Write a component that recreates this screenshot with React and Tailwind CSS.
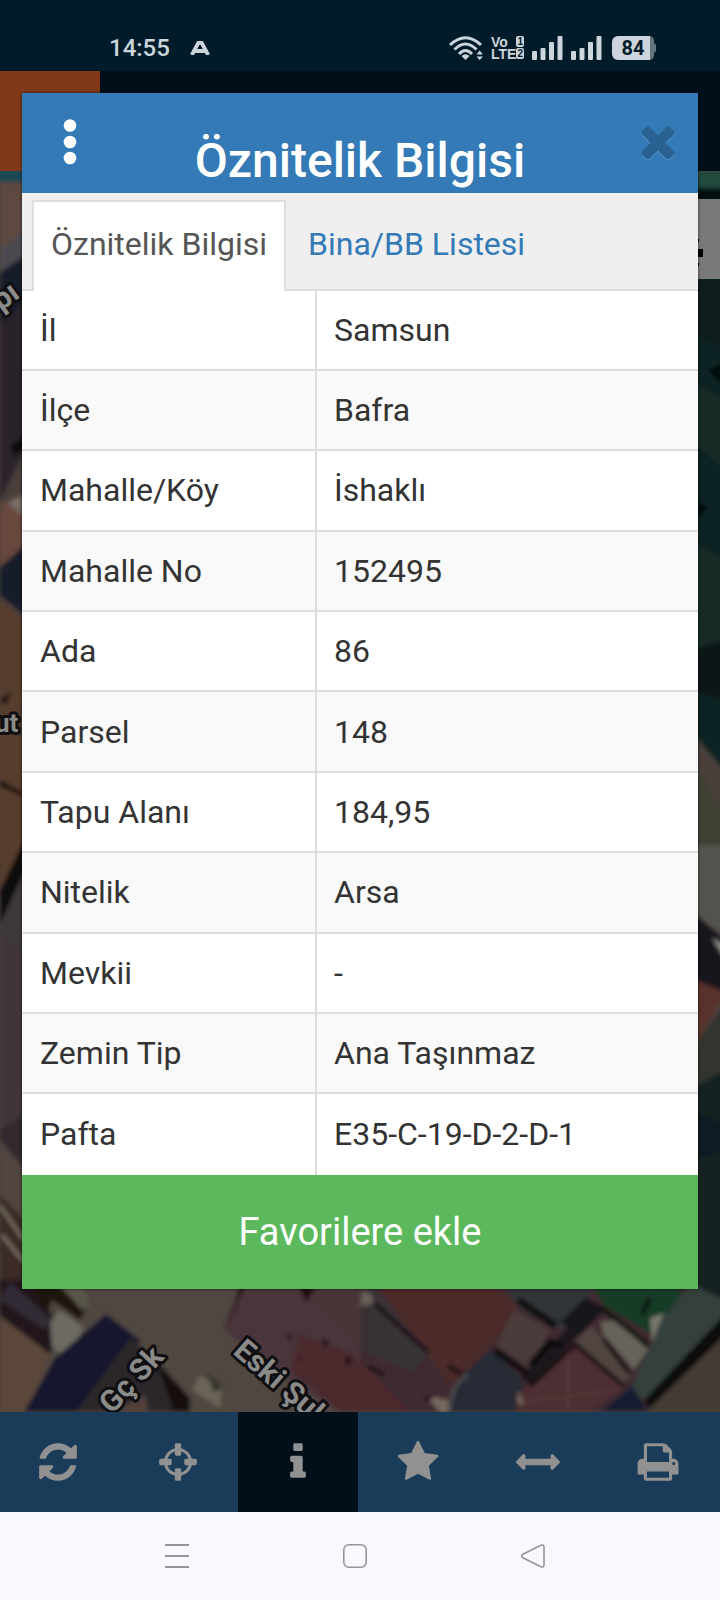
import { useState } from 'react'

const rows = [
  ['İl', 'Samsun'],
  ['İlçe', 'Bafra'],
  ['Mahalle/Köy', 'İshaklı'],
  ['Mahalle No', '152495'],
  ['Ada', '86'],
  ['Parsel', '148'],
  ['Tapu Alanı', '184,95'],
  ['Nitelik', 'Arsa'],
  ['Mevkii', '-'],
  ['Zemin Tip', 'Ana Taşınmaz'],
  ['Pafta', 'E35-C-19-D-2-D-1'],
]

const tools = [
  {
    id: 'refresh',
    label: 'Yenile',
    viewBox: '-128 0 1792 1792',
    d: 'M1511 1056q0 5-1 7-64 268-268 434.5t-478 166.5q-146 0-282.5-55t-243.5-157l-129 129q-19 19-45 19t-45-19-19-45v-448q0-26 19-45t45-19h448q26 0 45 19t19 45-19 45l-137 137q71 66 161 102t187 36q134 0 250-65t186-179q11-17 53-117 8-23 30-23h192q13 0 22.5 9.5t9.5 22.5zM1536 256v448q0 26-19 45t-45 19h-448q-26 0-45-19t-19-45 19-45l138-138q-148-137-349-137-134 0-250 65t-186 179q-11 17-53 117-8 23-30 23h-199q-13 0-22.5-9.5t-9.5-22.5v-7q65-268 270-434.5t480-166.5q146 0 284 55.5t245 156.5l130-129q19-19 45-19t45 19 19 45z',
  },
  {
    id: 'locate',
    label: 'Konum',
    viewBox: '-128 0 1792 1792',
    d: 'M1197 1024h-109q-26 0-45-19t-19-45v-128q0-26 19-45t45-19h109q-32-108-112.5-188.5t-188.5-112.5v109q0 26-19 45t-45 19h-128q-26 0-45-19t-19-45v-109q-108 32-188.5 112.5t-112.5 188.5h109q26 0 45 19t19 45v128q0 26-19 45t-45 19h-109q32 108 112.5 188.5t188.5 112.5v-109q0-26 19-45t45-19h128q26 0 45 19t19 45v109q108-32 188.5-112.5t112.5-188.5zM1536 832v128q0 26-19 45t-45 19h-143q-37 161-154.5 278.5t-278.5 154.5v143q0 26-19 45t-45 19h-128q-26 0-45-19t-19-45v-143q-161-37-278.5-154.5t-154.5-278.5h-143q-26 0-45-19t-19-45v-128q0-26 19-45t45-19h143q37-161 154.5-278.5t278.5-154.5v-143q0-26 19-45t45-19h128q26 0 45 19t19 45v143q161 37 278.5 154.5t154.5 278.5h143q26 0 45 19t19 45z',
  },
  {
    id: 'info',
    label: 'Bilgi',
    viewBox: '-576 0 1792 1792',
    d: 'M640 1344v128q0 26-19 45t-45 19h-512q-26 0-45-19t-19-45v-128q0-26 19-45t45-19h64v-384h-64q-26 0-45-19t-19-45v-128q0-26 19-45t45-19h384q26 0 45 19t19 45v576h64q26 0 45 19t19 45zM512 192v192q0 26-19 45t-45 19h-256q-26 0-45-19t-19-45v-192q0-26 19-45t45-19h256q26 0 45 19t19 45z',
  },
  {
    id: 'favorites',
    label: 'Favoriler',
    viewBox: '-64 0 1792 1792',
    d: 'M1664 647q0 22-26 48l-363 354 86 500q1 7 1 20 0 21-10.5 35.5t-30.5 14.5q-19 0-40-12l-449-236-449 236q-22 12-40 12-21 0-31.5-14.5t-10.5-35.5q0-6 2-20l86-500-364-354q-25-27-25-48 0-37 56-46l502-73 225-455q19-41 49-41t49 41l225 455 502 73q56 9 56 46z',
  },
  {
    id: 'measure',
    label: 'Ölçüm',
    viewBox: '0 0 1792 1792',
    d: 'M1792 896q0 26-19 45l-256 256q-19 19-45 19t-45-19-19-45v-128h-1024v128q0 26-19 45t-45 19-45-19l-256-256q-19-19-19-45t19-45l256-256q19-19 45-19t45 19 19 45v128h1024v-128q0-26 19-45t45-19 45 19l256 256q19 19 19 45z',
  },
  {
    id: 'print',
    label: 'Yazdır',
    viewBox: '-64 0 1792 1792',
    d: 'M384 1536h896v-256h-896v256zM384 896h896v-384h-160q-40 0-68-28t-28-68v-160h-640v640zM1536 960q0-26-19-45t-45-19-45 19-19 45 19 45 45 19 45-19 19-45zM1664 960v416q0 13-9.5 22.5t-22.5 9.5h-224v160q0 40-28 68t-68 28h-960q-40 0-68-28t-28-68v-160h-224q-13 0-22.5-9.5t-9.5-22.5v-416q0-79 56.5-135.5t135.5-56.5h64v-544q0-40 28-68t68-28h672q40 0 88 20t76 48l152 152q28 28 48 76t20 88v256h64q79 0 135.5 56.5t56.5 135.5z',
  },
]

function WifiIcon() {
  return (
    <svg viewBox="0 0 34 24" className="h-6 w-[34px]" fill="none" stroke="#cbd5db" strokeWidth="3">
      <path d="M1 9Q16.500-5.500 32 9" />
      <path d="M5.500 13.500Q16.500 2.500 27.500 13.500" />
      <path d="M10 18Q16.500 11 23 18" />
      <path d="M12.500 20Q16.500 16.500 20.500 20L16.500 24Z" fill="#cbd5db" stroke="none" />
      <path d="M27.500 18.500L30.700 14.500L34 18.500ZM27.500 20.500L30.700 24L34 20.500Z" fill="#cbd5db" stroke="none" />
    </svg>
  )
}

function SignalIcon() {
  return (
    <svg viewBox="0 0 31 24" className="h-6 w-[31px]" fill="#cbd5db">
      <rect x="0" y="15" width="5" height="9" rx="1" />
      <rect x="8.500" y="12" width="5" height="12" rx="1" />
      <rect x="17" y="6" width="5" height="18" rx="1" />
      <rect x="25.500" y="0" width="5" height="24" rx="1" />
    </svg>
  )
}

function StatusBar() {
  return (
    <header className="flex h-[71px] items-center justify-between bg-[#001b29] pt-6 pr-16 pl-[109px] text-[#cbd5db]">
      <div className="flex items-center gap-5">
        <span className="text-2xl font-medium">14:55</span>
        <svg viewBox="0 0 20 14" className="h-3.5 w-5" fill="none" stroke="#cbd5db" strokeWidth="3.800">
          <path d="M1.800 14L8.400 1.800H11.600L18.200 14M5 10H15" />
        </svg>
      </div>
      <div className="flex items-center gap-2">
        <WifiIcon />
        <div className="flex flex-col font-['Liberation_Sans',sans-serif] text-sm leading-3 font-bold">
          <span className="flex items-center justify-between">
            Vo
            <span className="rounded-xs bg-[#cbd5db] px-px text-[10px] leading-[11px] text-[#001b29]">1</span>
          </span>
          <span className="flex items-center">
            LTE
            <span className="rounded-xs bg-[#cbd5db] px-px text-[10px] leading-[11px] text-[#001b29]">2</span>
          </span>
        </div>
        <SignalIcon />
        <SignalIcon />
        <div className="ml-0.5 flex items-center">
          <span className="flex h-6 w-[38px] items-center justify-center rounded-l-md bg-[#cbd5db] pl-1 text-xl leading-6 font-bold text-[#001b29]">
            84
          </span>
          <svg viewBox="0 0 6 24" className="h-6 w-1.5" fill="#64747d">
            <path d="M0 0Q4 1 4 5V7L6 9V15L4 17V19Q4 23 0 24Z" />
          </svg>
        </div>
      </div>
    </header>
  )
}

function MapView() {
  return (
    <svg
      viewBox="0 171 720 1241"
      preserveAspectRatio="xMidYMid slice"
      className="absolute inset-0 h-full w-full"
    >
      <defs>
        <filter id="soft" x="-5%" y="-5%" width="110%" height="110%">
          <feGaussianBlur stdDeviation="2" />
        </filter>
      </defs>
      <rect y="171" width="720" height="1241" fill="#4a403b" />
      <g filter="url(#soft)">
        {/* left edge */}
        <rect x="-5" y="160" width="60" height="22" fill="#1d4856" />
        <path d="M0 183H30V230L0 252Z" fill="#5d483f" />
        <path d="M0 250L30 226V255L0 275Z" fill="#4c4a50" />
        <path d="M0 272L30 252V300L0 330Z" fill="#191a2b" />
        <path d="M0 325L30 296V440L0 500Z" fill="#2a232b" />
        <path d="M10 446L30 432V445L14 456Z" fill="#07070b" />
        <path d="M0 505L30 490V540L0 566Z" fill="#68473c" />
        <path d="M8 503L22 496V515Z" fill="#777069" />
        <path d="M0 568L30 540V620L0 595Z" fill="#191d2a" />
        <path d="M0 600L30 625V840L0 900Z" fill="#573e2d" />
        <path d="M0 700L12 690L6 705Z" fill="#180d0b" />
        <path d="M0 780L30 796V800L0 786Z" fill="#180d0b" />
        <path d="M0 890L30 828V860L0 925Z" fill="#100b0d" />
        <path d="M0 925L30 860V965L0 940Z" fill="#3d373b" />
        <path d="M0 930L30 960V1120L0 1200Z" fill="#40343a" />
        <path d="M0 1130L30 1110V1180L0 1150Z" fill="#33292d" />
        <path d="M0 1140L30 1175V1230L0 1200Z" fill="#51453f" />
        <path d="M0 1195L30 1225V1290H0Z" fill="#3b2b25" />
        <path d="M0 1206L24 1240M2 1235L24 1262" stroke="#7b7567" strokeWidth="3" />

        {/* right edge */}
        <path d="M690 171H725V770L690 730Z" fill="#102320" />
        <path d="M690 171H725V188H690Z" fill="#244a3e" />
        <path d="M690 188H725V200H690Z" fill="#050d0e" />
        <path d="M690 280H725V350L690 330Z" fill="#0d1b1c" />
        <path d="M708 370L725 362V388Z" fill="#030b0b" />
        <path d="M690 380L725 400V470L690 440Z" fill="#182b25" />
        <path d="M690 500L708 506L698 520Z" fill="#040b0c" />
        <path d="M690 540L725 560V640L690 660Z" fill="#182b25" />
        <path d="M690 650L725 640V700L690 690Z" fill="#0a1818" />
        <path d="M690 770L704 775L725 815V850H690Z" fill="#3f4035" />
        <path d="M690 845H725V935L690 910Z" fill="#53534d" />
        <path d="M690 910L725 940V1000H690Z" fill="#19141d" />
        <path d="M712 938L725 945V958Z" fill="#8c8c88" />
        <path d="M690 978L725 992L698 1040H690Z" fill="#59302b" />
        <path d="M690 1050L725 1005V1090L690 1110Z" fill="#33362d" />
        <path d="M690 1090L725 1070V1310H690Z" fill="#122320" />
        <path d="M690 1110L725 1125V1150L690 1160Z" fill="#0b1a20" />

        {/* strip under the dialog */}
        <path d="M0 1280H690L725 1310V1420H0Z" fill="#50463f" />
        <path d="M0 1318L50 1352L28 1412H0Z" fill="#5b473b" />
        <path d="M0 1280H30L62 1330L50 1354L0 1316Z" fill="#21181b" />
        <path d="M10 1282L50 1318L45 1330L0 1300Z" fill="#302c35" />
        <path d="M30 1284H66L86 1308L80 1320L52 1300L48 1312Z" fill="#1d130c" />
        <path d="M60 1286H82L90 1305L82 1310Z" fill="#5a564b" />
        <path d="M50 1322L60 1310L84 1328L66 1358L52 1347Z" fill="#6c6b62" />
        <path d="M55 1358L106 1314L140 1340L108 1412H24Z" fill="#14172e" />
        <path d="M130 1338L158 1362L190 1405L188 1412H76Z" fill="#2b282c" />
        <path d="M156 1360L190 1398V1412H174Z" fill="#190f11" />
        <path d="M145 1395L110 1412H148Z" fill="#533f3b" />
        <path d="M200 1375L230 1395L220 1408L192 1390Z" fill="#6b6559" />
        <path d="M206 1372L224 1386L214 1393Z" fill="#37362f" />
        <path d="M240 1284H690L725 1310V1412H360L224 1328Z" fill="#402a30" />
        <path d="M224 1328L340 1414H220Z" fill="#50463f" />
        <path d="M242 1284L238 1310L224 1330L300 1390L340 1412L360 1380V1284Z" fill="#49363a" />
        <path d="M300 1284H360V1345L322 1312Z" fill="#493438" />
        <path d="M298 1284H318L306 1302Z" fill="#1b0c11" />
        <path d="M240 1284H248L235 1304Z" fill="#211317" />
        <path d="M300 1334L350 1352L410 1412H340L290 1370Z" fill="#4b292e" />
        <path d="M288 1332L293 1338L288 1342ZM322 1338L330 1342L324 1348ZM345 1356L354 1360L346 1366ZM298 1356L302 1359L299 1361Z" fill="#210d13" />
        <path d="M360 1284H374L430 1352L412 1372L360 1350Z" fill="#393336" />
        <path d="M374 1284H500L520 1308L470 1370L450 1385L428 1354Z" fill="#4c292c" />
        <path d="M373 1302L428 1352" stroke="#150d12" strokeWidth="4" />
        <path d="M362 1290L372 1295L374 1304L360 1306Z" fill="#695e59" />
        <path d="M500 1284H590V1310L560 1330L520 1310Z" fill="#313437" />
        <path d="M514 1310L550 1330L532 1370L496 1345Z" fill="#4c3b3b" />
        <path d="M575 1320L590 1300L605 1310L575 1340L530 1385L520 1378Z" fill="#1b171c" />
        <path d="M518 1300L556 1326M494 1350L528 1374M530 1366L550 1342L562 1346" stroke="#100b11" strokeWidth="7" fill="none" />
        <path d="M560 1322L585 1298L602 1306L578 1334Z" fill="#13121b" />
        <path d="M490 1350L520 1376L530 1412H448L462 1375Z" fill="#272a34" />
        <path d="M575 1345L624 1386L590 1412H516V1396Z" fill="#4d2d30" />
        <path d="M568 1350V1412M520 1402L620 1390" stroke="#59383b" strokeWidth="2" />
        <path d="M575 1340L592 1326L632 1375L622 1384Z" fill="#514541" />
        <path d="M576 1345L624 1386M604 1340L630 1374M576 1344L530 1386" stroke="#110a0c" strokeWidth="4" />
        <path d="M600 1322L618 1320L648 1350L634 1370L604 1335Z" fill="#66635a" />
        <path d="M590 1284H684L672 1320L648 1332L605 1306Z" fill="#193b28" />
        <path d="M602 1308L648 1345M650 1298L642 1314" stroke="#081410" strokeWidth="5" />
        <path d="M690 1284L725 1300V1325L650 1405L630 1390L662 1320Z" fill="#35403d" />
        <path d="M650 1318L664 1313L652 1342Z" fill="#77786b" />
        <path d="M725 1314L644 1400L650 1412L725 1345Z" fill="#090b0b" />
        <path d="M725 1335L646 1412H725Z" fill="#443a34" />
        <path d="M600 1412L632 1386L648 1412Z" fill="#131a30" />
        <path d="M518 1390L524 1404H518ZM426 1396L448 1400V1412H440Z" fill="#776961" />
        <path d="M450 1412Q450 1385 468 1375" stroke="#4e5052" strokeWidth="3" fill="none" />
        <path d="M448 1366L462 1374M424 1400L432 1397M368 1366L384 1375" stroke="#160e11" strokeWidth="4" />
      </g>
      <g
        fill="#8b8b8a"
        stroke="#101012"
        strokeWidth="6"
        paintOrder="stroke"
        strokeLinejoin="round"
        className="font-[Roboto,sans-serif] text-[30px] font-bold"
      >
        <text transform="translate(112 1415) rotate(-47)">Gç Sk</text>
        <text transform="translate(232 1353) rotate(41)">Eski Şul</text>
        <text transform="translate(-8 318) rotate(-36)">rpı</text>
        <text x="-5" y="732" className="text-[26px]">ut</text>
      </g>
      <rect x="690" y="199" width="40" height="80" fill="#797979" />
      <path d="M690 249H703V257H690ZM690 239H699V242H690ZM690 263H699V266H690Z" fill="#000" />
    </svg>
  )
}

function Toolbar() {
  const [active, setActive] = useState('info')

  return (
    <nav className="bg-[#1a3c59]">
      <div className="mr-0.5 -ml-0.5 grid grid-cols-6">
        {tools.map((tool) => (
          <button
            key={tool.id}
            aria-label={tool.label}
            onClick={() => setActive(tool.id)}
            className={`flex h-[100px] items-center justify-center ${active === tool.id ? 'bg-[#000f1a]' : ''}`}
          >
            <svg viewBox={tool.viewBox} className="h-11 w-11" fill="#919191">
              <path d={tool.d} />
            </svg>
          </button>
        ))}
      </div>
    </nav>
  )
}

function SystemNav() {
  return (
    <footer className="grid h-[88px] grid-cols-3 bg-[#f8f8fe] pr-[98px] pl-[88px]">
      <button aria-label="Son uygulamalar" className="flex items-center justify-center">
        <svg viewBox="0 0 24 24" className="h-6 w-6" stroke="#949499" strokeWidth="1.800">
          <path d="M0 1H24M0 12H24M0 23H24" />
        </svg>
      </button>
      <button aria-label="Ana ekran" className="flex items-center justify-center">
        <svg viewBox="0 0 24 24" className="h-6 w-6" fill="none" stroke="#949499" strokeWidth="1.600">
          <rect x="0.800" y="0.800" width="22.400" height="22.400" rx="5" />
        </svg>
      </button>
      <button aria-label="Geri" className="flex items-center justify-center">
        <svg viewBox="0 0 24 24" className="h-6 w-6" fill="none" stroke="#949499" strokeWidth="1.600">
          <path d="M1.800 10.300L20 1.300Q23 0.300 23 3V21Q23 23.700 20 22.700L1.800 13.700Q-0.600 12 1.800 10.300Z" />
        </svg>
      </button>
    </footer>
  )
}

function AttributeDialog() {
  const [tab, setTab] = useState('info')

  return (
    <section
      role="dialog"
      aria-labelledby="dialog-title"
      className="absolute inset-x-[22px] top-[93px] bg-white shadow-[0_0_3px_rgba(0,0,0,0.6)]"
    >
      <div className="flex h-[100px] items-center justify-between bg-[#337ab7] px-5">
        <div className="flex w-24">
          <button aria-label="Menü" className="flex h-24 w-14 items-center justify-center">
            <svg viewBox="0 0 14 50" className="h-[50px] w-3.5" fill="#fff">
              <circle cx="7" cy="7.500" r="6.300" />
              <circle cx="7" cy="24" r="6.300" />
              <circle cx="7" cy="40" r="6.300" />
            </svg>
          </button>
        </div>
        <h1 id="dialog-title" className="pt-9 text-center text-[48px] leading-[60px] font-medium text-white">
          Öznitelik Bilgisi
        </h1>
        <div className="flex w-24 justify-end">
          <button aria-label="Kapat" className="flex h-24 w-10 items-center justify-center">
            <svg viewBox="0 64 1408 1792" className="h-[50px] w-10 drop-shadow-[0_1px_0_#5a9bd0]" fill="#296292">
              <path d="M1298 1322q0 40-28 68l-136 136q-28 28-68 28t-68-28l-294-294-294 294q-28 28-68 28t-68-28l-136-136q-28-28-28-68t28-68l294-294-294-294q-28-28-28-68t28-68l136-136q28-28 68-28t68 28l294 294 294-294q28-28 68-28t68 28l136 136q28 28 28 68t-28 68l-294 294 294 294q28 28 28 68z" />
            </svg>
          </button>
        </div>
      </div>

      <div role="tablist" className="flex h-[98px] border-b-2 border-[#dddddd] bg-[#efefef] px-2.5 pt-[7px] text-[32px]">
        <button
          role="tab"
          aria-selected={tab === 'info'}
          onClick={() => setTab('info')}
          className="-mb-0.5 border-2 border-b-0 border-[#dddddd] bg-white px-[17px] pb-1.5 text-[#555555]"
        >
          Öznitelik Bilgisi
        </button>
        <button
          role="tab"
          aria-selected={tab === 'building'}
          onClick={() => setTab('building')}
          className="px-[22px] pb-0.5 text-[#337ab7]"
        >
          Bina/BB Listesi
        </button>
      </div>

      <table className="h-[884px] w-full border-collapse text-[32px] text-[#333333]">
        <tbody>
          {rows.map(([name, value]) => (
            <tr key={name} className="border-b-2 border-[#dddddd] last:border-white even:bg-[#f9f9f9]">
              <th scope="row" className="w-[294px] border-r-2 border-r-[#dddddd] pl-[18px] text-left font-normal">
                {name}
              </th>
              <td className="pl-[17px]">{value}</td>
            </tr>
          ))}
        </tbody>
      </table>

      <button className="h-[114px] w-full bg-[#5cb85c] text-[38px] text-white">Favorilere ekle</button>
    </section>
  )
}

export default function App() {
  return (
    <div className="relative flex min-h-screen flex-col overflow-hidden font-[Roboto,sans-serif]">
      <StatusBar />
      <div className="flex h-[100px] bg-[#000f1a]">
        <div className="w-[100px] bg-[#81391a]" />
      </div>
      <main className="relative flex-1">
        <MapView />
      </main>
      <Toolbar />
      <SystemNav />
      <AttributeDialog />
    </div>
  )
}
